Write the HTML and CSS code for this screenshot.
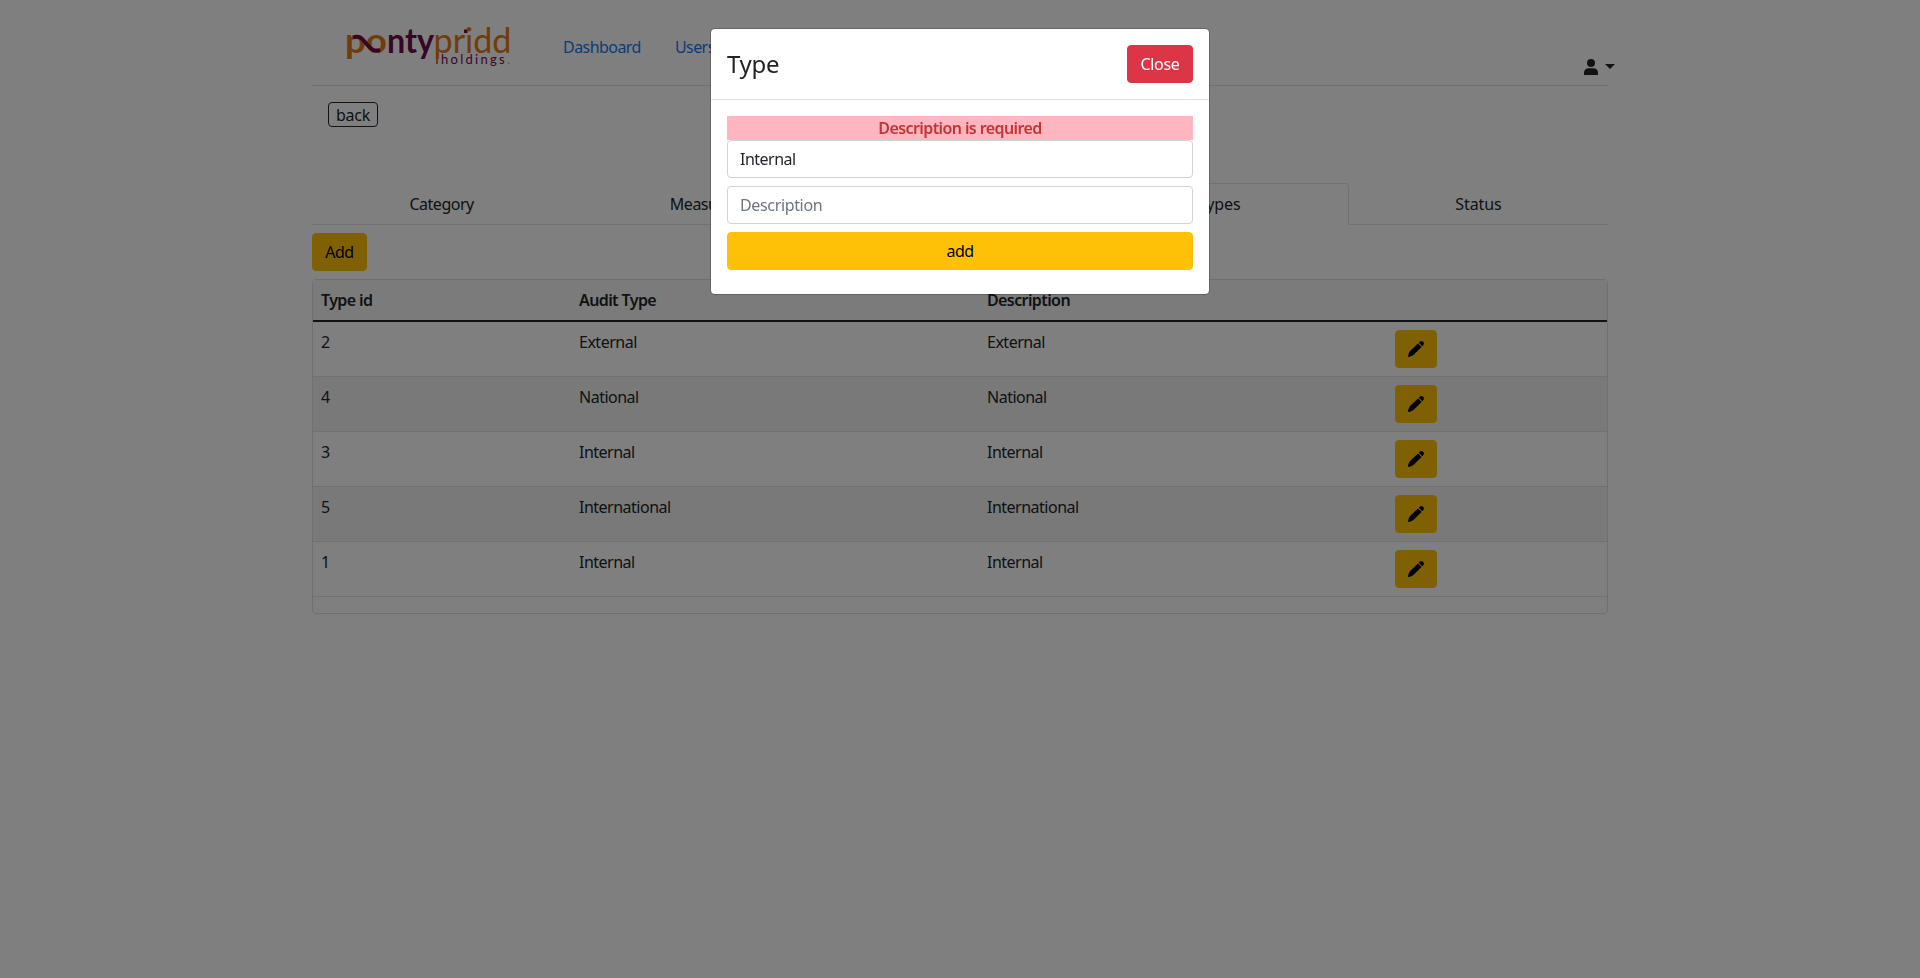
FILE: index.html
```
<!DOCTYPE html>
<html lang="en">
<head>
<meta charset="utf-8">
<title>Types</title>
<link rel="stylesheet" href="styles.css">
</head>
<body>
<svg class="sprite" width="0" height="0">
  <symbol id="pencil" viewBox="0 0 16 16"><path d="M10 2.500l3.600 3.600-7.400 7.200c-1.400 1.500-3.500 2.500-6.200 2.700.2-2.700 1.100-4.900 2.600-6.400zM10.800 1.700l.9-.9c1-1.100 2.400-1 3.400 0s1.100 2.400 0 3.500l-.8.9z"/></symbol>
</svg>
<div class="container">
  <header class="navbar">
    <svg class="logo" width="170" height="46" viewBox="0 0 170 46">
      <text class="logo-bold logo-orange" x="0" y="30" font-size="34" textLength="42" lengthAdjust="spacingAndGlyphs">po</text>
      <path class="swoosh" d="M8 14.500C15 11.500 18 17 22 21.500S29 29 35 27"/>
      <text class="logo-bold logo-purple" x="42" y="30" font-size="34" textLength="47" lengthAdjust="spacingAndGlyphs">nty</text>
      <text class="logo-light logo-orange" x="88.500" y="30" font-size="34" textLength="78" lengthAdjust="spacingAndGlyphs">pridd</text>
      <path class="logo-orange" d="M91 28h2v13h-2z"/>
      <path class="logo-purple" d="M119 6.500h3.500v3.500h-3.500z"/>
      <text class="logo-light logo-purple" x="96" y="41" font-size="13" textLength="69" lengthAdjust="spacing">holdings<tspan class="logo-dot">.</tspan></text>
    </svg>
    <nav class="links"><a>Dashboard</a><a>Users</a></nav>
    <div class="user">
      <svg width="14" height="16" viewBox="0 0 14 16"><circle cx="7" cy="4" r="4"/><path d="M0 16v-2.500C0 11 2 9.300 4.500 9.300h5C12 9.300 14 11 14 13.500V16z"/></svg>
      <span class="caret"></span>
    </div>
  </header>
  <div class="toolbar"><button class="back">back</button></div>
  <ul class="tabs">
    <li>Category</li><li>Measure</li><li>Priority</li><li class="active">Types</li><li>Status</li>
  </ul>
  <button class="btn btn-warning add">Add</button>
  <section class="card">
    <div class="row head"><span>Type id</span><span>Audit Type</span><span>Description</span><span></span></div>
    <div class="row"><span>2</span><span>External</span><span>External</span><span><button class="btn btn-warning"><svg width="16" height="16"><use href="#pencil"/></svg></button></span></div>
    <div class="row alt"><span>4</span><span>National</span><span>National</span><span><button class="btn btn-warning"><svg width="16" height="16"><use href="#pencil"/></svg></button></span></div>
    <div class="row"><span>3</span><span>Internal</span><span>Internal</span><span><button class="btn btn-warning"><svg width="16" height="16"><use href="#pencil"/></svg></button></span></div>
    <div class="row alt"><span>5</span><span>International</span><span>International</span><span><button class="btn btn-warning"><svg width="16" height="16"><use href="#pencil"/></svg></button></span></div>
    <div class="row"><span>1</span><span>Internal</span><span>Internal</span><span><button class="btn btn-warning"><svg width="16" height="16"><use href="#pencil"/></svg></button></span></div>
  </section>
</div>
<div class="backdrop">
  <div class="modal">
    <div class="modal-header"><h5>Type</h5><button class="btn btn-danger">Close</button></div>
    <div class="modal-body">
      <div class="error">Description is required</div>
      <input class="field" value="Internal">
      <input class="field" placeholder="Description">
      <button class="btn btn-warning wide">add</button>
    </div>
  </div>
</div>
</body>
</html>
```
FILE: styles.css
```
* { box-sizing: border-box; }
body { margin: 0; background: #fff; color: #212529; font: 16px/24px "Noto Sans", sans-serif; letter-spacing: -.5px; overflow: hidden; }
button, input { font: inherit; letter-spacing: inherit; }
.sprite { display: block; }
.container { width: 1296px; margin: 0 auto; display: flex; flex-direction: column; align-items: flex-start; }
.navbar { width: 100%; height: 86px; border-bottom: 1px solid #dee2e6; display: flex; align-items: flex-start; }
.logo { margin: 23px 0 0 33px; flex: none; overflow: visible; letter-spacing: 0; }
.logo-bold { font-family: Lato, sans-serif; font-weight: 700; }
.logo-light { font-family: Lato, sans-serif; font-weight: 400; }
.logo-orange { fill: #e07a14; }
.logo-purple { fill: #730a4c; }
.logo-dot { fill-opacity: .4; }
.swoosh { fill: none; stroke: #730a4c; stroke-width: 4; }
.links { display: flex; gap: 34px; margin: 35px 0 0 48px; color: #1678f5; letter-spacing: -.55px; }
.user { margin: 59px -7px 0 auto; display: flex; align-items: flex-start; gap: 7px; }
.user svg { fill: #212529; }
.caret { margin-top: 5px; border-top: 5px solid #212529; border-left: 5px solid transparent; border-right: 5px solid transparent; }
.toolbar { padding: 16px; height: 97px; }
.back { display: block; width: 50px; height: 25px; padding: 1px 0 0; line-height: 22px; border: 1px solid #212529; border-radius: 4px; background: transparent; color: #212529; letter-spacing: -.2px; }
.tabs { width: 100%; height: 42px; margin: 0 0 8px; padding: 0; list-style: none; display: flex; border-bottom: 1px solid #dee2e6; }
.tabs li { flex: 1; height: 42px; padding: 8px 16px; border: 1px solid transparent; text-align: center; }
.tabs .active, .tabs li:last-child { letter-spacing: -.1px; }
.tabs .active { background: #fff; border-color: #dee2e6 #dee2e6 #fff; border-radius: 4px 4px 0 0; }
.btn { display: inline-block; height: 38px; padding: 6px 12px; border: 1px solid transparent; border-radius: 4px; line-height: 24px; }
.btn-warning { background: #ffc107; border-color: #ffc107; color: #000; }
.btn-danger { width: 66px; background: #dc3545; border-color: #dc3545; color: #fff; letter-spacing: -.3px; }
.add { width: 55px; }
.btn svg { display: block; }
.card { width: 100%; margin-top: 8px; padding-bottom: 16px; border: 1px solid #dfdfdf; border-radius: 4px; }
.row { height: 55px; padding: 8px; display: grid; grid-template-columns: 258px 408px 408px 1fr; border-bottom: 1px solid #dee2e6; }
.row .btn { display: block; }
.alt { background: #f2f2f2; }
.head { height: 42px; font-weight: 600; letter-spacing: -.6px; background: #f7f7f7; border-bottom: 2px solid #212529; }
.backdrop { position: fixed; inset: 0; background: rgba(0, 0, 0, .5); padding-top: 28px; }
.modal { width: 500px; height: 267px; margin: 0 auto; background: #fff; background-clip: padding-box; border: 1px solid rgba(0, 0, 0, .2); border-radius: 5px; }
.modal-header { height: 71px; padding: 16px; display: flex; justify-content: space-between; align-items: flex-start; border-bottom: 1px solid #dee2e6; }
.modal h5 { margin: 0; font-size: 24px; line-height: 38px; font-weight: 400; letter-spacing: -.3px; }
.modal-body { padding: 16px; display: flex; flex-direction: column; }
.error { background: #ffb6c1; color: #c53434; font-weight: 600; letter-spacing: -.6px; text-align: center; height: 24px; }
.field { height: 38px; margin: 0 0 8px; padding: 6px 12px; border: 1px solid #ced4da; border-radius: 4px; color: #212529; background: #fff; }
.field::placeholder { color: #6c757d; opacity: 1; letter-spacing: -.35px; }
```
